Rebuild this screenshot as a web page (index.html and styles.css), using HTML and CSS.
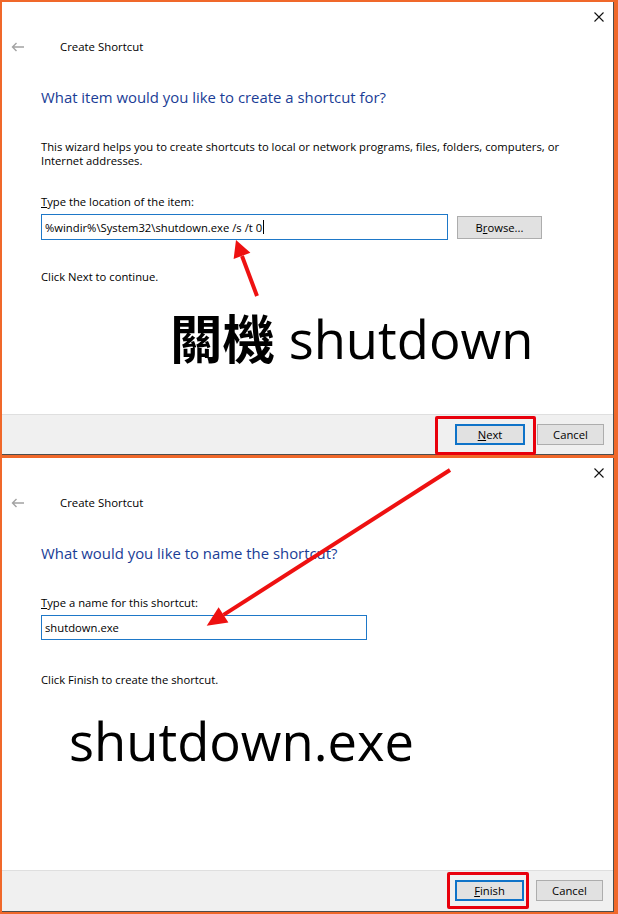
FILE: index.html
```html
<!DOCTYPE html>
<html lang="en">
<head>
<meta charset="utf-8">
<title>Create Shortcut</title>
<link rel="stylesheet" href="styles.css">
</head>
<body>
<div class="frame">
  <section class="dialog dialog-a">
    <div class="content">
      <div class="titlebar">
        <svg class="close" width="10" height="10" viewBox="0 0 10 10"><path d="M0.5 0.5L9.5 9.5M9.5 0.5L0.5 9.5" stroke="#111" stroke-width="1.1" fill="none"/></svg>
      </div>
      <div class="nav">
        <svg class="back" width="14" height="10" viewBox="0 0 14 10"><path d="M13 5H1.5M5.5 1L1.5 5L5.5 9" stroke="#a3a3a3" stroke-width="1.4" fill="none"/></svg>
        <span class="nav-title">Create Shortcut</span>
      </div>
      <div class="body">
        <h1 class="heading">What item would you like to create a shortcut for?</h1>
        <p class="desc">This wizard helps you to create shortcuts to local or network programs, files, folders, computers, or Internet addresses.</p>
        <p class="label label-a"><u>T</u>ype the location of the item:</p>
        <div class="field-row">
          <div class="input input-a">%windir%\System32\shutdown.exe /s /t 0<span class="caret"></span></div>
          <button class="btn btn-browse">B<u>r</u>owse...</button>
        </div>
        <p class="hint hint-a">Click Next to continue.</p>
        <div class="big big-a"><span class="cjk">關機</span> shutdown</div>
      </div>
    </div>
    <div class="footer">
      <div class="marked">
        <button class="btn btn-primary btn-next"><u>N</u>ext</button>
        <span class="mark mark-next"></span>
      </div>
      <button class="btn btn-cancel">Cancel</button>
    </div>
  </section>

  <section class="dialog dialog-b">
    <div class="content">
      <div class="titlebar">
        <svg class="close" width="10" height="10" viewBox="0 0 10 10"><path d="M0.5 0.5L9.5 9.5M9.5 0.5L0.5 9.5" stroke="#111" stroke-width="1.1" fill="none"/></svg>
      </div>
      <div class="nav">
        <svg class="back" width="14" height="10" viewBox="0 0 14 10"><path d="M13 5H1.5M5.5 1L1.5 5L5.5 9" stroke="#a3a3a3" stroke-width="1.4" fill="none"/></svg>
        <span class="nav-title">Create Shortcut</span>
      </div>
      <div class="body">
        <h1 class="heading">What would you like to name the shortcut?</h1>
        <p class="label label-b"><u>T</u>ype a name for this shortcut:</p>
        <div class="field-row">
          <div class="input input-b">shutdown.exe</div>
        </div>
        <p class="hint hint-b">Click Finish to create the shortcut.</p>
        <div class="big big-b">shutdown.exe</div>
      </div>
    </div>
    <div class="footer footer-b">
      <div class="marked">
        <button class="btn btn-primary btn-finish"><u>F</u>inish</button>
        <span class="mark mark-finish"></span>
      </div>
      <button class="btn btn-cancel">Cancel</button>
    </div>
  </section>
</div>

<svg class="arrows" width="618" height="914" viewBox="0 0 618 914">
  <line x1="257" y1="296" x2="242" y2="256" stroke="#ee1111" stroke-width="4"/>
  <polygon points="236,240 250.4,252.7 233.6,259.1" fill="#ee1111"/>
  <line x1="450" y1="470" x2="223.5" y2="614.9" stroke="#ee1111" stroke-width="4"/>
  <polygon points="206.7,625.7 228.4,622.5 218.6,607.3" fill="#ee1111"/>
</svg>
</body>
</html>
```

FILE: styles.css
```css
html, body {
  margin: 0;
  padding: 0;
}

body {
  width: 618px;
  height: 914px;
  background: #f0682a;
  font-family: "Open Sans", "Noto Sans", sans-serif;
  font-size: 11.25px;
  color: #000;
  position: relative;
  overflow: hidden;
}

.frame {
  display: flex;
  flex-direction: column;
  gap: 3px;
  padding: 2px 4px 2px 2px;
}

.dialog {
  width: 611px;
  background: #fff;
  border-right: 1px solid #4d4d4d;
  border-bottom: 1px solid #4d4d4d;
  display: flex;
  flex-direction: column;
}

.dialog-a { height: 452px; }
.dialog-b { height: 453px; }

.content {
  height: 412px;
  flex: none;
  display: flex;
  flex-direction: column;
}

.titlebar {
  height: 30px;
  display: flex;
  justify-content: flex-end;
  align-items: flex-start;
  padding-right: 9px;
  box-sizing: border-box;
  padding-top: 10px;
}

.nav {
  height: 30px;
  display: flex;
  align-items: center;
  padding-left: 9px;
  gap: 35px;
}

.nav-title {
  font-size: 11.4px;
  line-height: 14px;
}

.body {
  padding-left: 39px;
  display: flex;
  flex-direction: column;
  align-items: flex-start;
}

.heading {
  margin: 25px 0 0;
  font-size: 14.9px;
  font-weight: 400;
  line-height: 20px;
  color: #1a3d96;
}

.desc {
  margin: 33px 0 0;
  width: 540px;
  line-height: 14px;
}

.label {
  margin: 0;
  line-height: 14px;
}

.label-a { margin-top: 27px; }
.label-b { margin-top: 33px; }

.field-row {
  display: flex;
  align-items: center;
  gap: 9px;
  margin-top: 5px;
}

.input {
  height: 25px;
  box-sizing: border-box;
  border: 1px solid #1e78c8;
  padding: 0 3px;
  display: flex;
  align-items: center;
  white-space: nowrap;
}

.input-a { width: 407px; height: 26px; }
.input-b { width: 326px; }

.caret {
  display: inline-block;
  width: 1px;
  height: 14px;
  background: #000;
  margin-left: 1px;
}

.hint {
  margin: 0;
  line-height: 14px;
}

.hint-a { margin-top: 30px; }
.hint-b { margin-top: 33px; }

.big {
  font-size: 52.5px;
  font-weight: 500;
  line-height: 60px;
  white-space: nowrap;
}

.big-a { margin: 22px 0 0 129px; }
.big-b { margin: 24px 0 0 28px; }

.cjk {
  font-family: "Noto Sans CJK TC", sans-serif;
  font-weight: 700;
}

.footer {
  flex: 1;
  background: #f0f0f0;
  border-top: 1px solid #dfdfdf;
  display: flex;
  justify-content: flex-end;
  align-items: flex-start;
  gap: 12px;
  padding: 9px 9px 0 0;
}

.footer-b { padding-right: 10px; }

.btn {
  height: 21px;
  box-sizing: border-box;
  background: #e1e1e1;
  border: 1px solid #adadad;
  font-family: inherit;
  font-size: 11.25px;
  color: #000;
  padding: 0;
  margin: 0;
  line-height: 17px;
}

.btn-browse { width: 85px; height: 23px; }
.btn-cancel { width: 67px; }
.btn-primary { border: 2px solid #0f73c8; }
.btn-next { width: 70px; }
.btn-finish { width: 69px; }

.marked {
  position: relative;
  display: flex;
}

.mark {
  position: absolute;
  border: 3px solid #e8000c;
  border-radius: 2px;
  pointer-events: none;
}

.mark-next { left: -20px; right: -11px; top: -8px; bottom: -10px; }
.mark-finish { left: -8px; right: -5px; top: -8px; bottom: -8px; }

.arrows {
  position: absolute;
  left: 0;
  top: 0;
  pointer-events: none;
}
```
